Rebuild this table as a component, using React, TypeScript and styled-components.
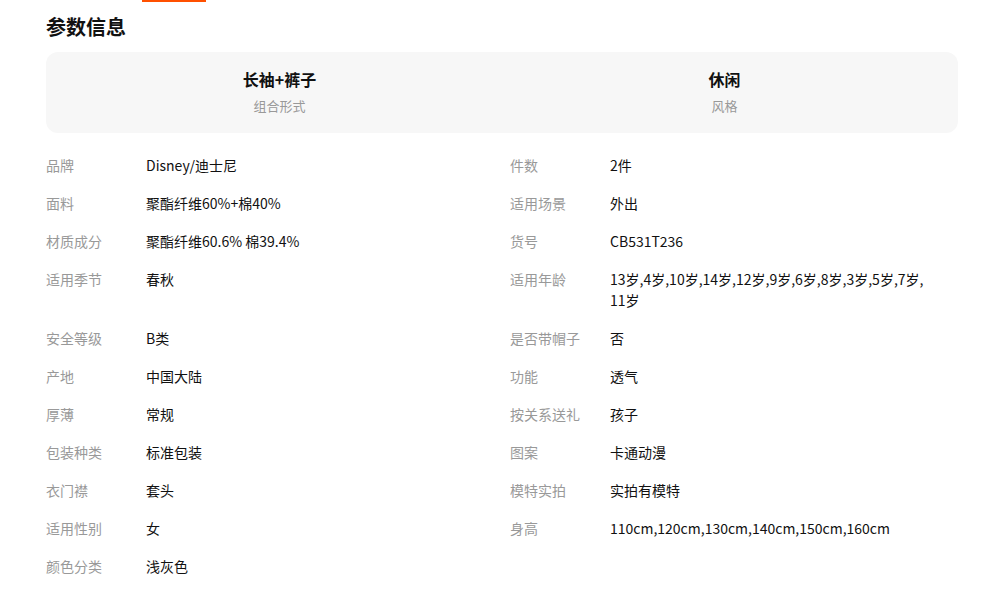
import { Fragment } from 'react';
import styled, { createGlobalStyle } from 'styled-components';

const GlobalStyle = createGlobalStyle`
  html, body {
    margin: 0;
    padding: 0;
    background: #fff;
    font-family: "Microsoft YaHei", "Noto Sans CJK SC", "Noto Sans", sans-serif;
  }
`;

const Page = styled.div`
  width: 982px;
  padding: 0 24px 20px 46px;
  box-sizing: border-box;
`;

const TabBar = styled.div`
  height: 2px;
  margin-left: 96px;
`;

const TabIndicator = styled.div`
  width: 64px;
  height: 2px;
  background: #ff5000;
`;

const Title = styled.h2`
  margin: 11px 0 11px;
  font-size: 20px;
  line-height: 28px;
  font-weight: 700;
  color: #111;
`;

const Highlights = styled.div`
  display: grid;
  grid-template-columns: 1fr 1fr;
  padding: 15px 11px 17px;
  background: #f7f7f7;
  border-radius: 12px;
  width: 912px;
  box-sizing: border-box;
`;

const Highlight = styled.div`
  display: flex;
  flex-direction: column;
  align-items: center;
`;

const HighlightValue = styled.div`
  font-size: 16px;
  line-height: 24px;
  font-weight: 700;
  color: #111;
`;

const HighlightLabel = styled.div`
  margin-top: 5px;
  font-size: 13px;
  line-height: 20px;
  color: #999;
`;

const ParamGrid = styled.div`
  display: grid;
  grid-template-columns: 464px 448px;
  margin-top: 14px;
`;

const Param = styled.div`
  display: flex;
  padding: 8px 0 9px;
  font-size: 14px;
  line-height: 21px;
`;

const ParamLabel = styled.div`
  flex: 0 0 100px;
  color: #999;
`;

const ParamValue = styled.div`
  flex: 1;
  color: #111;
  padding-right: 8px;
`;

const Item = styled.span`
  white-space: nowrap;
`;

const highlights = [
  { value: '长袖+裤子', label: '组合形式' },
  { value: '休闲', label: '风格' },
];

const params: [string, string][] = [
  ['品牌', 'Disney/迪士尼'],
  ['件数', '2件'],
  ['面料', '聚酯纤维60%+棉40%'],
  ['适用场景', '外出'],
  ['材质成分', '聚酯纤维60.6% 棉39.4%'],
  ['货号', 'CB531T236'],
  ['适用季节', '春秋'],
  ['适用年龄', '13岁,4岁,10岁,14岁,12岁,9岁,6岁,8岁,3岁,5岁,7岁,11岁'],
  ['安全等级', 'B类'],
  ['是否带帽子', '否'],
  ['产地', '中国大陆'],
  ['功能', '透气'],
  ['厚薄', '常规'],
  ['按关系送礼', '孩子'],
  ['包装种类', '标准包装'],
  ['图案', '卡通动漫'],
  ['衣门襟', '套头'],
  ['模特实拍', '实拍有模特'],
  ['适用性别', '女'],
  ['身高', '110cm,120cm,130cm,140cm,150cm,160cm'],
  ['颜色分类', '浅灰色'],
];

// list values break only after a comma
const renderValue = (value: string) => {
  const parts = value.split(',');
  if (parts.length === 1) return value;
  return parts.map((p, i) => (
    <Fragment key={i}>
      <Item>{i < parts.length - 1 ? `${p},` : p}</Item>
      {i < parts.length - 1 && <wbr />}
    </Fragment>
  ));
};

export default function App() {
  return (
    <Page>
      <GlobalStyle />
      <TabBar>
        <TabIndicator />
      </TabBar>
      <Title>参数信息</Title>
      <Highlights>
        {highlights.map((h) => (
          <Highlight key={h.label}>
            <HighlightValue>{h.value}</HighlightValue>
            <HighlightLabel>{h.label}</HighlightLabel>
          </Highlight>
        ))}
      </Highlights>
      <ParamGrid>
        {params.map(([label, value]) => (
          <Param key={label}>
            <ParamLabel>{label}</ParamLabel>
            <ParamValue>{renderValue(value)}</ParamValue>
          </Param>
        ))}
      </ParamGrid>
    </Page>
  );
}
